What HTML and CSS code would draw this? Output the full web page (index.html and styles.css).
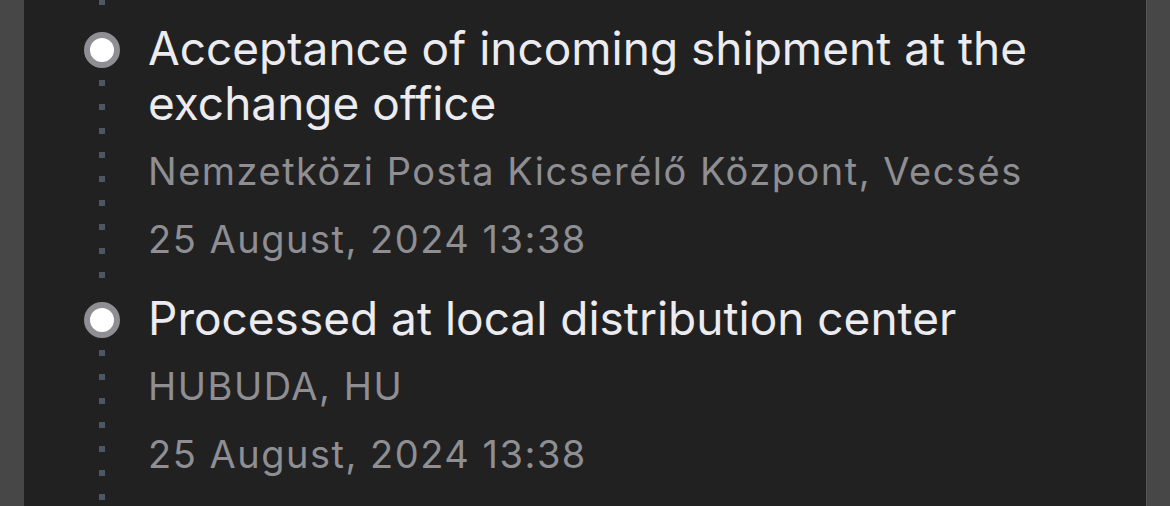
FILE: index.html
```html
<!DOCTYPE html>
<html lang="en">
<head>
<meta charset="utf-8">
<title>Tracking timeline</title>
<link rel="stylesheet" href="styles.css">
</head>
<body>
<main class="panel">
  <ol class="timeline">
    <li class="tail">
      <div class="marker"><div class="dots dots-top"></div></div>
    </li>
    <li class="event">
      <div class="marker">
        <span class="bullet"></span>
        <div class="dots"></div>
      </div>
      <div class="info">
        <p class="title">Acceptance of incoming shipment at the exchange office</p>
        <p class="place">Nemzetközi Posta Kicserélő Központ, Vecsés</p>
        <p class="date">25 August, 2024 13:38</p>
      </div>
    </li>
    <li class="event">
      <div class="marker">
        <span class="bullet"></span>
        <div class="dots"></div>
      </div>
      <div class="info">
        <p class="title">Processed at local distribution center</p>
        <p class="place">HUBUDA, HU</p>
        <p class="date">25 August, 2024 13:38</p>
      </div>
    </li>
  </ol>
</main>
</body>
</html>
```

FILE: styles.css
```css
* { box-sizing: border-box; }

html, body {
  margin: 0;
  height: 100%;
}

body {
  background: #474747;
  font-family: Inter, "Noto Sans", "Liberation Sans", sans-serif;
  overflow: hidden;
}

.panel {
  margin: 0 24px;
  min-height: 100%;
  background: #212121;
  box-shadow: 1px 0 0 #555555;
}

.timeline {
  list-style: none;
  margin: 0;
  padding: 0 24px 0 60px;
  display: flex;
  flex-direction: column;
}

.tail {
  height: 21px;
  display: flex;
}

.event {
  display: flex;
  gap: 28px;
  padding-bottom: 30px;
}

.marker {
  width: 36px;
  flex: none;
  display: flex;
  flex-direction: column;
  align-items: center;
}

.event .marker {
  margin-bottom: -30px;
}

.bullet {
  width: 36px;
  height: 36px;
  margin-top: 11px;
  border-radius: 50%;
  border: 6px solid #8e8e93;
  background: #ffffff;
  flex: none;
}

.dots {
  flex: 1;
  width: 6px;
  margin-top: 12px;
  background-image: repeating-linear-gradient(to bottom, #4d5864 0 6px, transparent 6px 24px);
}

.marker .dots-top {
  margin-top: -1px;
}

.info {
  flex: 1;
  min-width: 0;
}

.info .title,
.info .place,
.info .date {
  margin: 0;
}

.info .title {
  font-size: 46px;
  line-height: 55px;
  color: #ebebf0;
  letter-spacing: 0;
}

.info .place,
.info .date {
  font-size: 38px;
  line-height: 44px;
  color: #8e8e93;
  letter-spacing: 1.5px;
}

.info .place {
  margin-top: 18px;
}

.info .date {
  margin-top: 24px;
}
```
